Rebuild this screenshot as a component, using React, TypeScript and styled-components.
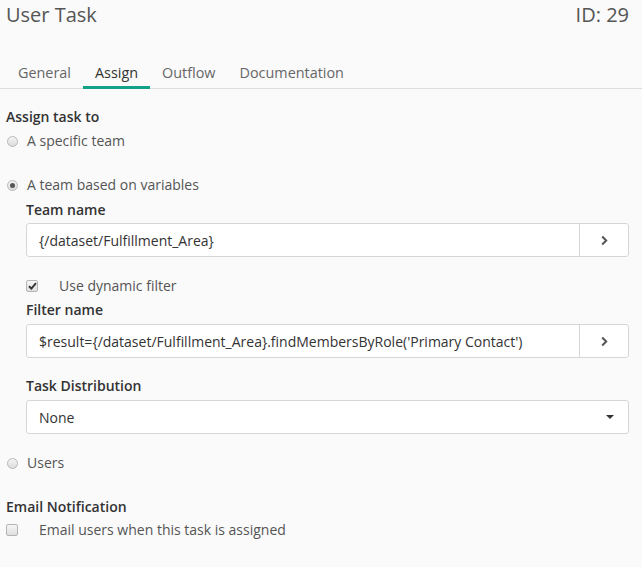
import React from "react";
import styled, { createGlobalStyle } from "styled-components";

const Global = createGlobalStyle`
  html, body { margin: 0; padding: 0; background: #fafafa; }
  body { font-family: "Open Sans", "Noto Sans", sans-serif; color: #555; }
  * { box-sizing: border-box; }
`;

const Page = styled.div`
  width: 642px;
  min-height: 567px;
  background: #fafafa;
`;

const Header = styled.div`
  display: flex;
  justify-content: space-between;
  align-items: center;
  padding: 3px 13px 0 6px;
  height: 27px;
`;

const Title = styled.h1`
  margin: 0;
  font-size: 20px;
  font-weight: 400;
  line-height: 24px;
  color: #555;
`;

const TabBar = styled.div`
  display: flex;
  margin-top: 31px;
  padding-left: 6px;
  border-bottom: 1px solid #dedede;
`;

const Tab = styled.div<{ $active?: boolean }>`
  padding: 5px 12px 3px;
  font-size: 14.4px;
  line-height: 20px;
  color: ${(p) => (p.$active ? "#333" : "#666")};
  border-bottom: 3px solid ${(p) => (p.$active ? "#12a288" : "transparent")};
  margin-bottom: -1px;
`;

const Content = styled.div`
  padding: 18px 13px 0 6px;
  display: flex;
  flex-direction: column;
`;

const Label = styled.div<{ $mt?: number }>`
  font-size: 14px;
  line-height: 20px;
  font-weight: 600;
  color: #333;
  margin-top: ${(p) => p.$mt ?? 0}px;
`;

const Option = styled.label<{ $mt?: number; $gap?: number }>`
  display: flex;
  align-items: center;
  gap: ${(p) => p.$gap ?? 9}px;
  font-size: 14px;
  line-height: 20px;
  color: #555;
  margin-top: ${(p) => p.$mt ?? 0}px;
`;

const Radio = styled.span<{ $checked?: boolean }>`
  position: relative;
  width: 11px;
  height: 11px;
  margin-left: 1px;
  border-radius: 50%;
  border: 1px solid #b9b9b9;
  background: linear-gradient(#f4f4f4, #dcdcdc);
  flex: none;
  &::after {
    content: "";
    display: ${(p) => (p.$checked ? "block" : "none")};
    position: absolute;
    left: 2px;
    top: 2px;
    width: 5px;
    height: 5px;
    border-radius: 50%;
    background: #555;
  }
`;

const Check = styled.span`
  display: flex;
  align-items: center;
  justify-content: center;
  width: 12px;
  height: 12px;
  border-radius: 2px;
  border: 1px solid #b5b5b5;
  background: linear-gradient(#f6f6f6, #dedede);
  flex: none;
`;

const Nested = styled.div`
  padding-left: 20px;
  display: flex;
  flex-direction: column;
`;

const Field = styled.div<{ $mt?: number }>`
  display: flex;
  height: 34px;
  margin-top: ${(p) => p.$mt ?? 3}px;
  background: #fff;
  border: 1px solid #d6d6d6;
  border-radius: 3px;
`;

const FieldText = styled.div`
  flex: 1;
  display: flex;
  align-items: center;
  padding: 0 12px;
  font-size: 14px;
  color: #333;
  white-space: nowrap;
  overflow: hidden;
`;

const FieldButton = styled.div`
  width: 49px;
  flex: none;
  display: flex;
  align-items: center;
  justify-content: center;
  border-left: 1px solid #d6d6d6;
`;

const Caret = styled.div`
  width: 0;
  height: 0;
  margin-right: 14px;
  align-self: center;
  border-left: 4px solid transparent;
  border-right: 4px solid transparent;
  border-top: 4px solid #333;
`;

const Chevron = () => (
  <svg width="9" height="11" viewBox="0 0 9 11">
    <path d="M2.2 1.5 L6.2 5.5 L2.2 9.5" fill="none" stroke="#555" strokeWidth="2" />
  </svg>
);

const Tick = () => (
  <svg width="9" height="8" viewBox="0 0 9 8">
    <path d="M1 4.2 L3.4 6.5 L8 1.2" fill="none" stroke="#333" strokeWidth="1.9" />
  </svg>
);

export default function App() {
  return (
    <Page>
      <Global />
      <Header>
        <Title>User Task</Title>
        <Title>ID: 29</Title>
      </Header>
      <TabBar>
        <Tab>General</Tab>
        <Tab $active>Assign</Tab>
        <Tab>Outflow</Tab>
        <Tab>Documentation</Tab>
      </TabBar>
      <Content>
        <Label>Assign task to</Label>
        <Option $mt={4}>
          <Radio />
          A specific team
        </Option>
        <Option $mt={24}>
          <Radio $checked />
          A team based on variables
        </Option>
        <Nested>
          <Label $mt={5}>Team name</Label>
          <Field>
            <FieldText>{"{/dataset/Fulfillment_Area}"}</FieldText>
            <FieldButton>
              <Chevron />
            </FieldButton>
          </Field>
          <Option $mt={19} $gap={21}>
            <Check>
              <Tick />
            </Check>
            Use dynamic filter
          </Option>
          <Label $mt={4}>Filter name</Label>
          <Field $mt={4}>
            <FieldText>
              {"$result={/dataset/Fulfillment_Area}.findMembersByRole('Primary Contact')"}
            </FieldText>
            <FieldButton>
              <Chevron />
            </FieldButton>
          </Field>
          <Label $mt={18}>Task Distribution</Label>
          <Field $mt={4}>
            <FieldText>None</FieldText>
            <Caret />
          </Field>
        </Nested>
        <Option $mt={19}>
          <Radio />
          Users
        </Option>
        <Label $mt={24}>Email Notification</Label>
        <Option $mt={3} $gap={21}>
          <Check />
          Email users when this task is assigned
        </Option>
      </Content>
    </Page>
  );
}
